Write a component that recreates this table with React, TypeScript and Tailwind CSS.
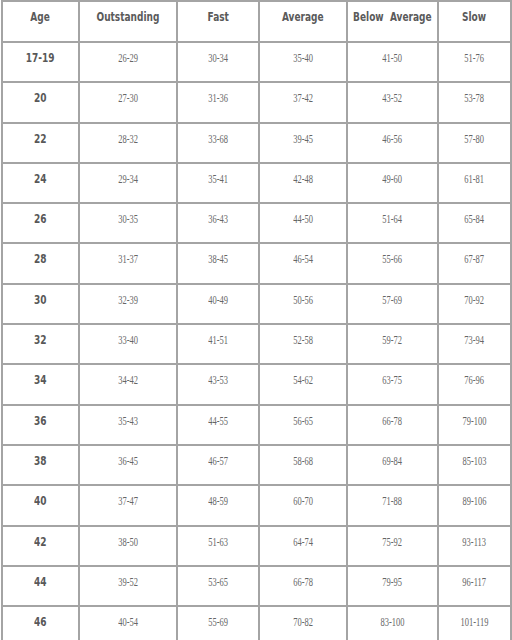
import React from 'react';

const headers = ['Age', 'Outstanding', 'Fast', 'Average', 'Below  Average', 'Slow'];

const rows: string[][] = [
  ['17-19', '26-29', '30-34', '35-40', '41-50', '51-76'],
  ['20', '27-30', '31-36', '37-42', '43-52', '53-78'],
  ['22', '28-32', '33-68', '39-45', '46-56', '57-80'],
  ['24', '29-34', '35-41', '42-48', '49-60', '61-81'],
  ['26', '30-35', '36-43', '44-50', '51-64', '65-84'],
  ['28', '31-37', '38-45', '46-54', '55-66', '67-87'],
  ['30', '32-39', '40-49', '50-56', '57-69', '70-92'],
  ['32', '33-40', '41-51', '52-58', '59-72', '73-94'],
  ['34', '34-42', '43-53', '54-62', '63-75', '76-96'],
  ['36', '35-43', '44-55', '56-65', '66-78', '79-100'],
  ['38', '36-45', '46-57', '58-68', '69-84', '85-103'],
  ['40', '37-47', '48-59', '60-70', '71-88', '89-106'],
  ['42', '38-50', '51-63', '64-74', '75-92', '93-113'],
  ['44', '39-52', '53-65', '66-78', '79-95', '96-117'],
  ['46', '40-54', '55-69', '70-82', '83-100', '101-119'],
];

const widths = ['w-[77px]', 'w-[98px]', 'w-[82px]', 'w-[88px]', 'w-[91px]', 'w-[73px]'];

export default function App() {
  return (
    <div className="w-[512px] h-[640px] overflow-hidden bg-white">
      <table className="ml-[1px] w-[510px] table-fixed border-collapse">
        <colgroup>
          {widths.map((w, i) => (
            <col key={i} className={w} />
          ))}
        </colgroup>
        <thead>
          <tr className="h-[41px]">
            {headers.map(h => (
              <th
                key={h}
                className="border-2 border-[#a4a4a4] p-0 pt-[8px] align-top font-bold text-[12px] leading-[14px] text-[#5a5a5a] font-['DejaVu_Sans',sans-serif] whitespace-pre"
              >
                <div className="flex justify-center">
                  <span className="shrink-0 scale-x-75">{h}</span>
                </div>
              </th>
            ))}
          </tr>
        </thead>
        <tbody>
          {rows.map(r => (
            <tr key={r[0]} className="h-[40.3px]">
              {r.map((c, i) => (
                <td
                  key={i}
                  className={
                    i === 0
                      ? "border-2 border-[#a4a4a4] p-0 pt-[8px] align-top font-bold text-[12px] leading-[14px] text-[#585858] font-['DejaVu_Sans',sans-serif]"
                      : "border-2 border-[#a4a4a4] p-0 pt-[7px] align-top text-[13px] leading-[15px] text-[#666666] font-['Liberation_Serif',serif]"
                  }
                >
                  <div className="flex justify-center">
                    <span className={i === 0 ? 'shrink-0 scale-x-75' : 'shrink-0 scale-x-65'}>{c}</span>
                  </div>
                </td>
              ))}
            </tr>
          ))}
        </tbody>
      </table>
    </div>
  );
}
